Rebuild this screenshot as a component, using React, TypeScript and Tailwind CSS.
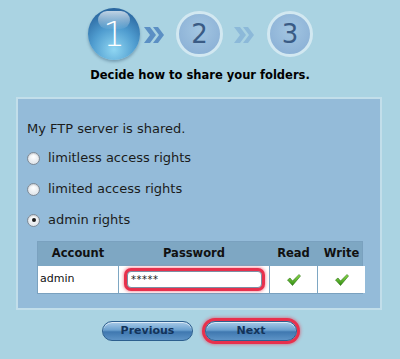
import React from 'react'

function Chevrons({ color }: { color: string }) {
  return (
    <svg width="22" height="18" viewBox="0 0 22 18">
      <path d="M1 1 L7 1 L13 9 L7 17 L1 17 L7 9 Z" fill={color} />
      <path d="M10 1 L15 1 L21 9 L15 17 L10 17 L16 9 Z" fill={color} />
    </svg>
  )
}

function Check() {
  return (
    <svg width="14" height="12" viewBox="0 0 14 12">
      <defs>
        <linearGradient id="ck" x1="0" y1="0" x2="0" y2="1">
          <stop offset="0" stopColor="#8fe04a" />
          <stop offset="1" stopColor="#2f8a12" />
        </linearGradient>
      </defs>
      <path d="M0.5 6 L3 4 L5.5 7 L12 0.5 L13.5 2 L5.5 11.5 Z" fill="url(#ck)" stroke="#2c6e14" strokeWidth="0.6" />
    </svg>
  )
}

function Radio({ checked }: { checked?: boolean }) {
  return (
    <span className="w-[13px] h-[13px] rounded-full border border-[#7f8a96] bg-[radial-gradient(circle_at_50%_35%,#ffffff,#d6dde4)] flex items-center justify-center shadow-[inset_0_1px_1px_rgba(0,0,0,0.15)]">
      {checked && <span className="w-[4px] h-[4px] rounded-full bg-[#1a1a1a]" />}
    </span>
  )
}

const pill =
  "h-[20px] rounded-full border border-[#2d5f8e] bg-[linear-gradient(to_bottom,#a9cbe8_0%,#6aa0cf_45%,#3f78b0_55%,#5d93c6_100%)] text-[11px] font-bold text-[#13335a] flex items-center justify-center shadow-[inset_0_1px_0_rgba(255,255,255,0.6)]"

export default function App() {
  return (
    <div className="w-[400px] h-[359px] bg-[#aad3e2] font-['DejaVu_Sans',sans-serif] overflow-hidden">
      {/* Steps */}
      <div className="flex items-center pl-[88px] pt-[8px] h-[60px]">
        <div className="w-[52px] h-[52px] rounded-full bg-[radial-gradient(circle_at_50%_80%,#8fd6f2_0%,#4f9ccf_45%,#2c6aa3_80%,#23598c_100%)] shadow-[0_2px_3px_rgba(40,80,110,0.4)] relative flex items-center justify-center">
          <span className="absolute top-[3px] left-[10px] w-[32px] h-[18px] rounded-full bg-[linear-gradient(to_bottom,rgba(255,255,255,0.7),rgba(255,255,255,0.05))]" />
          <span className="relative text-[34px] leading-none text-white font-['DejaVu_Sans',sans-serif] font-extralight">1</span>
        </div>
        <div className="ml-[3px] mt-[2px]"><Chevrons color="#5b8fc4" /></div>
        <div className="ml-[11px] w-[47px] h-[46px] rounded-full border-[3px] border-[#d2e8f1] bg-[radial-gradient(circle_at_50%_40%,#a3c6e2,#86acd3)] flex items-center justify-center">
          <span className="text-[26px] leading-none text-[#3a5b85]">2</span>
        </div>
        <div className="ml-[10px] mt-[2px]"><Chevrons color="#8cb9d9" /></div>
        <div className="ml-[12px] w-[46px] h-[46px] rounded-full border-[3px] border-[#d2e8f1] bg-[radial-gradient(circle_at_50%_40%,#a3c6e2,#86acd3)] flex items-center justify-center">
          <span className="text-[26px] leading-none text-[#3a5b85]">3</span>
        </div>
      </div>

      <div className="mt-[8px] text-center text-[11.5px] font-bold text-black leading-[14px]">
        Decide how to share your folders.
      </div>

      {/* Panel */}
      <div className="mt-[15px] ml-[16px] w-[366px] h-[213px] bg-[#94bbd9] border-2 border-[#c2deea]">
        <div className="pl-[9px] pt-[22px] text-[13px] text-[#1b1b1b] leading-[16px]">My FTP server is shared.</div>
        <div className="flex flex-col gap-[15px] mt-[13px] pl-[9px] text-[13px] text-[#1b1b1b] leading-[16px]">
          <div className="flex items-center gap-[8px]"><Radio /><span>limitless access rights</span></div>
          <div className="flex items-center gap-[8px]"><Radio /><span>limited access rights</span></div>
          <div className="flex items-center gap-[8px]"><Radio checked /><span>admin rights</span></div>
        </div>

        <div className="ml-[19px] mt-[13px] w-[326px] border border-[#7aa1bf] bg-[#7ea7c3] text-[11px]">
          <div className="grid grid-cols-[80px_150px_47px_47px] gap-x-px h-[24px] items-center font-bold text-[11.5px] text-[#111] text-center">
            <span>Account</span>
            <span>Password</span>
            <span>Read</span>
            <span>Write</span>
          </div>
          <div className="grid grid-cols-[80px_150px_47px_47px] gap-x-px h-[27px] bg-[#7ea7c3]">
            <div className="bg-white flex items-center pl-[2px] text-[#111]">admin</div>
            <div className="bg-white flex items-center pl-[8px]">
              <div className="w-[135px] h-[17px] rounded-[4px] border border-[#7b8ea3] bg-white shadow-[0_0_0_3px_#e8304c,0_0_3px_4px_rgba(232,48,76,0.45)] flex items-center pl-[3px] text-[10px] leading-none text-[#222] tracking-[0.5px]">
                *****
              </div>
            </div>
            <div className="bg-white flex items-center justify-center"><Check /></div>
            <div className="bg-white flex items-center justify-center"><Check /></div>
          </div>
        </div>
      </div>

      {/* Buttons */}
      <div className="flex items-center mt-[11px] pl-[102px] gap-[12px]">
        <div className={`w-[91px] ${pill}`}>Previous</div>
        <div className="rounded-full shadow-[0_0_0_3px_#e8304c,0_0_3px_4px_rgba(232,48,76,0.45)]">
          <div className={`w-[92px] ${pill}`}>Next</div>
        </div>
      </div>
    </div>
  )
}
